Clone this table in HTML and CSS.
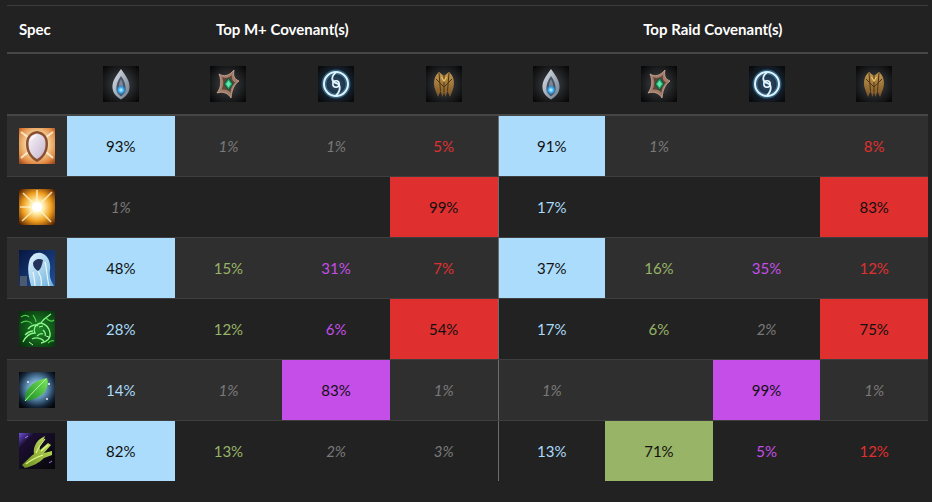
FILE: index.html
```html
<!DOCTYPE html>
<html>
<head>
<meta charset="utf-8">
<title>Covenants</title>
<link rel="stylesheet" href="styles.css">
</head>
<body>
<div class="board">
  <div class="row head">
    <div class="hcell spec-h">Spec</div>
    <div class="hcell group">Top M+ Covenant(s)</div>
    <div class="hcell group">Top Raid Covenant(s)</div>
  </div>

  <div class="row icons">
    <div class="icell"></div>
    <div class="icell"><svg class="cov" viewBox="0 0 36 36"><defs><radialGradient id="cb1" cx="50%" cy="50%" r="65%"><stop offset="0" stop-color="#44474c"/><stop offset="1" stop-color="#090909"/></radialGradient><linearGradient id="ks1" x1="0" y1="0" x2="1" y2="1"><stop offset="0" stop-color="#dfe6ee"/><stop offset="1" stop-color="#6d7a8a"/></linearGradient><radialGradient id="kg1" cx="50%" cy="50%" r="50%"><stop offset="0" stop-color="#d8f4ff"/><stop offset=".45" stop-color="#3ab2fa"/><stop offset="1" stop-color="#1a5a90" stop-opacity="0"/></radialGradient></defs><rect width="36" height="36" fill="url(#cb1)"/><path d="M18 3C23 10 27 15 26.5 22C26 28 22 31 18 33.5C14 31 10 28 9.5 22C9 15 13 10 18 3Z" fill="url(#ks1)"/><path d="M18 10C21.5 15 23 19 22.5 23.5C22 27 20 29 18 30.5C16 29 14 27 13.5 23.5C13 19 14.5 15 18 10Z" fill="#4a5463"/><path d="M18 13C20 17 20.5 20 20 24C19.5 26 19 27 18 28C17 27 16.5 26 16 24C15.5 20 16 17 18 13Z" fill="#7c8898"/><circle cx="18" cy="24" r="5.5" fill="url(#kg1)"/></svg></div>
    <div class="icell"><svg class="cov" viewBox="0 0 36 36"><defs><radialGradient id="cb2" cx="50%" cy="50%" r="65%"><stop offset="0" stop-color="#44474c"/><stop offset="1" stop-color="#090909"/></radialGradient></defs><rect width="36" height="36" fill="url(#cb2)"/><path d="M9 8C14 11 19 10 24 4C23 10 24 13 29 15C25 18 22 22 21 32C18 27 13 25 7 27C11 22 12 15 9 8Z" fill="#a27e6a" stroke="#d0ab96" stroke-width=".8"/><path d="M12 11C15 13 19 12 22 9C21.5 13 22.5 15 25.5 16.5C23 18.5 21 21 20.5 27C18.5 24 15.5 23 11.5 23.5C13.5 20 14 16 12 11Z" fill="#5e463a"/><path d="M18.5 12L23 18L18.5 24L14 18Z" fill="#1f9a66" stroke="#0d4a30" stroke-width=".8"/><path d="M18.5 14.5L21 18L18.5 21.5L16 18Z" fill="#62e6aa"/></svg></div>
    <div class="icell"><svg class="cov" viewBox="0 0 36 36"><defs><radialGradient id="cb3" cx="50%" cy="50%" r="65%"><stop offset="0" stop-color="#2e5272"/><stop offset=".6" stop-color="#16222e"/><stop offset="1" stop-color="#080a0c"/></radialGradient></defs><rect width="36" height="36" fill="url(#cb3)"/><circle cx="18" cy="18" r="12" fill="none" stroke="#5fb6e8" stroke-width="5" opacity=".4"/><circle cx="18" cy="18" r="12" fill="none" stroke="#dcf4ff" stroke-width="2"/><path d="M18 6.5C12.5 10.5 13.5 16 18 17C22.5 18 23.5 24 18 29.5" fill="none" stroke="#dcf4ff" stroke-width="1.8"/><circle cx="18" cy="18" r="3.2" fill="none" stroke="#eefaff" stroke-width="1.5"/></svg></div>
    <div class="icell"><svg class="cov" viewBox="0 0 36 36"><defs><radialGradient id="cb4" cx="50%" cy="50%" r="65%"><stop offset="0" stop-color="#44474c"/><stop offset="1" stop-color="#090909"/></radialGradient><linearGradient id="ng4" x1="0" y1="0" x2="0" y2="1"><stop offset="0" stop-color="#c49a50"/><stop offset="1" stop-color="#7a5424"/></linearGradient></defs><rect width="36" height="36" fill="url(#cb4)"/><path d="M18 10L13 6C8 10 7 17 9 23L12 31L14.5 25L16.5 31L18 26L19.5 31L21.5 25L24 31L27 23C29 17 28 10 23 6Z" fill="url(#ng4)"/><path d="M18 10L18 26M13 7L14.5 25M23 7L21.5 25M10 13L18 21L26 13" fill="none" stroke="#4e3412" stroke-width="1"/><path d="M15.5 11L18 15L20.5 11" fill="none" stroke="#f0c868" stroke-width="1.2"/></svg></div>
    <div class="icell"><svg class="cov" viewBox="0 0 36 36"><defs><radialGradient id="cb5" cx="50%" cy="50%" r="65%"><stop offset="0" stop-color="#44474c"/><stop offset="1" stop-color="#090909"/></radialGradient><linearGradient id="ks5" x1="0" y1="0" x2="1" y2="1"><stop offset="0" stop-color="#dfe6ee"/><stop offset="1" stop-color="#6d7a8a"/></linearGradient><radialGradient id="kg5" cx="50%" cy="50%" r="50%"><stop offset="0" stop-color="#d8f4ff"/><stop offset=".45" stop-color="#3ab2fa"/><stop offset="1" stop-color="#1a5a90" stop-opacity="0"/></radialGradient></defs><rect width="36" height="36" fill="url(#cb5)"/><path d="M18 3C23 10 27 15 26.5 22C26 28 22 31 18 33.5C14 31 10 28 9.5 22C9 15 13 10 18 3Z" fill="url(#ks5)"/><path d="M18 10C21.5 15 23 19 22.5 23.5C22 27 20 29 18 30.5C16 29 14 27 13.5 23.5C13 19 14.5 15 18 10Z" fill="#4a5463"/><path d="M18 13C20 17 20.5 20 20 24C19.5 26 19 27 18 28C17 27 16.5 26 16 24C15.5 20 16 17 18 13Z" fill="#7c8898"/><circle cx="18" cy="24" r="5.5" fill="url(#kg5)"/></svg></div>
    <div class="icell"><svg class="cov" viewBox="0 0 36 36"><defs><radialGradient id="cb6" cx="50%" cy="50%" r="65%"><stop offset="0" stop-color="#44474c"/><stop offset="1" stop-color="#090909"/></radialGradient></defs><rect width="36" height="36" fill="url(#cb6)"/><path d="M9 8C14 11 19 10 24 4C23 10 24 13 29 15C25 18 22 22 21 32C18 27 13 25 7 27C11 22 12 15 9 8Z" fill="#a27e6a" stroke="#d0ab96" stroke-width=".8"/><path d="M12 11C15 13 19 12 22 9C21.5 13 22.5 15 25.5 16.5C23 18.5 21 21 20.5 27C18.5 24 15.5 23 11.5 23.5C13.5 20 14 16 12 11Z" fill="#5e463a"/><path d="M18.5 12L23 18L18.5 24L14 18Z" fill="#1f9a66" stroke="#0d4a30" stroke-width=".8"/><path d="M18.5 14.5L21 18L18.5 21.5L16 18Z" fill="#62e6aa"/></svg></div>
    <div class="icell"><svg class="cov" viewBox="0 0 36 36"><defs><radialGradient id="cb7" cx="50%" cy="50%" r="65%"><stop offset="0" stop-color="#2e5272"/><stop offset=".6" stop-color="#16222e"/><stop offset="1" stop-color="#080a0c"/></radialGradient></defs><rect width="36" height="36" fill="url(#cb7)"/><circle cx="18" cy="18" r="12" fill="none" stroke="#5fb6e8" stroke-width="5" opacity=".4"/><circle cx="18" cy="18" r="12" fill="none" stroke="#dcf4ff" stroke-width="2"/><path d="M18 6.5C12.5 10.5 13.5 16 18 17C22.5 18 23.5 24 18 29.5" fill="none" stroke="#dcf4ff" stroke-width="1.8"/><circle cx="18" cy="18" r="3.2" fill="none" stroke="#eefaff" stroke-width="1.5"/></svg></div>
    <div class="icell"><svg class="cov" viewBox="0 0 36 36"><defs><radialGradient id="cb8" cx="50%" cy="50%" r="65%"><stop offset="0" stop-color="#44474c"/><stop offset="1" stop-color="#090909"/></radialGradient><linearGradient id="ng8" x1="0" y1="0" x2="0" y2="1"><stop offset="0" stop-color="#c49a50"/><stop offset="1" stop-color="#7a5424"/></linearGradient></defs><rect width="36" height="36" fill="url(#cb8)"/><path d="M18 10L13 6C8 10 7 17 9 23L12 31L14.5 25L16.5 31L18 26L19.5 31L21.5 25L24 31L27 23C29 17 28 10 23 6Z" fill="url(#ng8)"/><path d="M18 10L18 26M13 7L14.5 25M23 7L21.5 25M10 13L18 21L26 13" fill="none" stroke="#4e3412" stroke-width="1"/><path d="M15.5 11L18 15L20.5 11" fill="none" stroke="#f0c868" stroke-width="1.2"/></svg></div>
  </div>

  <div class="row data odd">
    <div class="spec"><svg class="sicon" viewBox="0 0 36 36"><defs><radialGradient id="s1" cx="50%" cy="45%" r="70%"><stop offset="0" stop-color="#fff8e8"/><stop offset=".45" stop-color="#f4d09a"/><stop offset=".8" stop-color="#e08840"/><stop offset="1" stop-color="#a04a20"/></radialGradient><linearGradient id="s1b" x1="0" y1="0" x2="1" y2="1"><stop offset="0" stop-color="#faf6fc"/><stop offset="1" stop-color="#c4b4cc"/></linearGradient></defs><rect width="36" height="36" fill="url(#s1)"/><path d="M2 4L10 10M34 4L26 10M2 30L9 24M34 30L27 24" stroke="#fff6e0" stroke-width="2" opacity=".8"/><path d="M18 3C25 4 29 8 29 16C29 25 24 31 18 34C12 31 7 25 7 16C7 8 11 4 18 3Z" fill="#8a5030"/><path d="M18 5.5C23.5 6.5 26.5 9.5 26.5 16C26.5 23.5 22.5 28.5 18 31C13.5 28.5 9.5 23.5 9.5 16C9.5 9.5 12.5 6.5 18 5.5Z" fill="url(#s1b)"/><path d="M12 12C13 9 15 8 17 7.5" stroke="#ffffff" stroke-width="1.2" fill="none"/></svg></div>
    <div class="cell hl blue">93%</div>
    <div class="cell low">1%</div>
    <div class="cell low">1%</div>
    <div class="cell red">5%</div>
    <div class="cell split hl blue">91%</div>
    <div class="cell low">1%</div>
    <div class="cell"></div>
    <div class="cell red">8%</div>
  </div>

  <div class="row data">
    <div class="spec"><svg class="sicon" viewBox="0 0 36 36"><defs><radialGradient id="s2" cx="50%" cy="50%" r="72%"><stop offset="0" stop-color="#ffffff"/><stop offset=".25" stop-color="#fff0b0"/><stop offset=".55" stop-color="#f0a020"/><stop offset=".85" stop-color="#7a3a05"/><stop offset="1" stop-color="#200c00"/></radialGradient></defs><rect width="36" height="36" fill="url(#s2)"/><path d="M18 18L4 4M18 18L33 3M18 18L3 32M18 18L32 33M18 18L18 1M18 18L1 18" stroke="#fff6d0" stroke-width="1.6" opacity=".8"/><circle cx="18" cy="18" r="5" fill="#fff"/></svg></div>
    <div class="cell low">1%</div>
    <div class="cell"></div>
    <div class="cell"></div>
    <div class="cell hl red">99%</div>
    <div class="cell split blue">17%</div>
    <div class="cell"></div>
    <div class="cell"></div>
    <div class="cell hl red">83%</div>
  </div>

  <div class="row data odd">
    <div class="spec"><svg class="sicon" viewBox="0 0 36 36"><defs><linearGradient id="s3" x1="0" y1="0" x2="1" y2="1"><stop offset="0" stop-color="#081640"/><stop offset="1" stop-color="#1f4f9a"/></linearGradient><linearGradient id="s3h" x1="0" y1="0" x2="1" y2="1"><stop offset="0" stop-color="#e4f6ff"/><stop offset="1" stop-color="#6ab0dc"/></linearGradient></defs><rect width="36" height="36" fill="url(#s3)"/><path d="M12 36C10 28 8 20 10 12C11 6 16 2 22 3C29 5 32 12 31 20C30 27 32 31 35 36Z" fill="url(#s3h)"/><path d="M14 13C16 9 20 8 24 10C23 15 22 19 19 21C16 19 14 17 14 13Z" fill="#223258"/><path d="M19 21C22 26 23 31 22 36M26 12C28 20 28 28 30 36M14 22C15 27 16 31 16 36" stroke="#ffffff" stroke-width="1.2" fill="none" opacity=".8"/><rect x="1" y="26" width="7" height="10" fill="#4a5a70"/></svg></div>
    <div class="cell hl blue">48%</div>
    <div class="cell green">15%</div>
    <div class="cell purple">31%</div>
    <div class="cell red">7%</div>
    <div class="cell split hl blue">37%</div>
    <div class="cell green">16%</div>
    <div class="cell purple">35%</div>
    <div class="cell red">12%</div>
  </div>

  <div class="row data">
    <div class="spec"><svg class="sicon" viewBox="0 0 36 36"><defs><radialGradient id="s4" cx="55%" cy="50%" r="70%"><stop offset="0" stop-color="#1f8a28"/><stop offset="1" stop-color="#06300c"/></radialGradient></defs><rect width="36" height="36" fill="url(#s4)"/><path d="M4 31C7 25 11 22 16 22C14 18 16 13 22 12C24 8 28 6 32 3M22 12C26 13 30 16 31 22C32 27 28 31 22 32M9 18C12 14 17 13 19 15M13 28C17 26 22 27 25 30M24 19C26 21 27 23 26 25M6 24C9 21 12 20 14 20M18 25C20 23 22 22 24 23" fill="none" stroke="#8cf88a" stroke-width="1.3"/><path d="M2 12C6 9 11 10 13 13M27 7C30 10 33 11 35 9M2 6C5 4 8 4 10 6M29 32C31 30 33 29 35 30M14 4C16 7 17 9 17 11" fill="none" stroke="#4ed04c" stroke-width="1.2"/><path d="M10 31L14 34M20 16L24 15M27 25L30 26" stroke="#b0ffa8" stroke-width="1"/></svg></div>
    <div class="cell blue">28%</div>
    <div class="cell green">12%</div>
    <div class="cell purple">6%</div>
    <div class="cell hl red">54%</div>
    <div class="cell split blue">17%</div>
    <div class="cell green">6%</div>
    <div class="cell low">2%</div>
    <div class="cell hl red">75%</div>
  </div>

  <div class="row data odd">
    <div class="spec"><svg class="sicon" viewBox="0 0 36 36"><defs><radialGradient id="s5" cx="50%" cy="45%" r="65%"><stop offset="0" stop-color="#d8f0ff"/><stop offset=".45" stop-color="#5a8ab0"/><stop offset=".8" stop-color="#14263a"/><stop offset="1" stop-color="#04080c"/></radialGradient><linearGradient id="s5l" x1="0" y1="1" x2="1" y2="0"><stop offset="0" stop-color="#1a8a26"/><stop offset="1" stop-color="#7ae85a"/></linearGradient></defs><rect width="36" height="36" fill="url(#s5)"/><path d="M6 29C5 19 12 9 28 6C31 15 25 27 6 29Z" fill="url(#s5l)"/><path d="M6 29C12 22 19 15 27 7" stroke="#b8f8a0" stroke-width="1" fill="none"/><circle cx="30" cy="12" r="1" fill="#fff"/><circle cx="9" cy="10" r=".9" fill="#fff"/><circle cx="28" cy="27" r=".9" fill="#fff"/></svg></div>
    <div class="cell blue">14%</div>
    <div class="cell low">1%</div>
    <div class="cell hl purple">83%</div>
    <div class="cell low">1%</div>
    <div class="cell split low">1%</div>
    <div class="cell"></div>
    <div class="cell hl purple">99%</div>
    <div class="cell low">1%</div>
  </div>

  <div class="row data last">
    <div class="spec"><svg class="sicon" viewBox="0 0 36 36"><defs><linearGradient id="s6" x1="0" y1="0" x2="1" y2="1"><stop offset="0" stop-color="#7050e0"/><stop offset=".22" stop-color="#1a0e30"/><stop offset="1" stop-color="#070707"/></linearGradient><linearGradient id="s6c" x1="0" y1="1" x2="1" y2="0"><stop offset="0" stop-color="#6a8a20"/><stop offset="1" stop-color="#c8e860"/></linearGradient></defs><rect width="36" height="36" fill="url(#s6)"/><path d="M3 32C8 27 12 23 15 21C14 16 16 10 21 6L26 3L24 8C21 11 20 14 21 17L29 10L32 12L25 20L33 18L33 22L25 25C20 30 14 33 6 35Z" fill="url(#s6c)"/><path d="M7 31C12 27 18 24 24 22M17 20C19 15 22 11 26 6M22 18L29 12" stroke="#e8f890" stroke-width="1.1" fill="none"/><path d="M6 5L9 3M30 30L33 28" stroke="#a080ff" stroke-width="1"/></svg></div>
    <div class="cell hl blue">82%</div>
    <div class="cell green">13%</div>
    <div class="cell low">2%</div>
    <div class="cell low">3%</div>
    <div class="cell split blue">13%</div>
    <div class="cell hl green">71%</div>
    <div class="cell purple">5%</div>
    <div class="cell red">12%</div>
  </div>
</div>
</body>
</html>
```
FILE: styles.css
```css
* { box-sizing: border-box; }

body {
  margin: 0;
  background: #222222;
  font-family: Lato, "Noto Sans", sans-serif;
}

.board {
  padding: 5px 4px 0 7px;
  width: 932px;
}

.row {
  display: grid;
  grid-template-columns: 60px repeat(8, 1fr);
  width: 921px;
}

.head {
  height: 49px;
  border-top: 1px solid #3c3c3c;
  border-bottom: 2px solid #464646;
  grid-template-columns: 60px 1fr 1fr;
}

.hcell {
  display: flex;
  align-items: center;
  color: #ffffff;
  font-weight: 700;
  font-size: 15px;
}

.spec-h { padding-left: 12px; }
.group { justify-content: center; }

.icons {
  height: 62px;
  border-bottom: 2px solid #464646;
}

.icell {
  display: flex;
  align-items: center;
  justify-content: center;
}

.cov, .sicon {
  width: 36px;
  height: 36px;
  display: block;
}

.data {
  height: 61px;
  border-bottom: 1px solid #3e3e3e;
}
.data.last {
  height: 60px;
  border-bottom: none;
}
.data.odd { background: #2f2f2f; }

.spec {
  display: flex;
  align-items: center;
  justify-content: center;
}

.cell {
  display: flex;
  align-items: center;
  justify-content: center;
  font-size: 15px;
}

.split { border-left: 1px solid #6c6c6c; }

.blue { color: #a9dbfa; }
.green { color: #98b466; }
.purple { color: #c54ee8; }
.red { color: #e02f2f; }
.low { color: #7a7a7a; font-style: italic; }

.hl { color: #111111; }
.hl.blue { background: #abdcfb; }
.hl.green { background: #98b466; }
.hl.purple { background: #c54ee8; }
.hl.red { background: #e02f2f; }
```
